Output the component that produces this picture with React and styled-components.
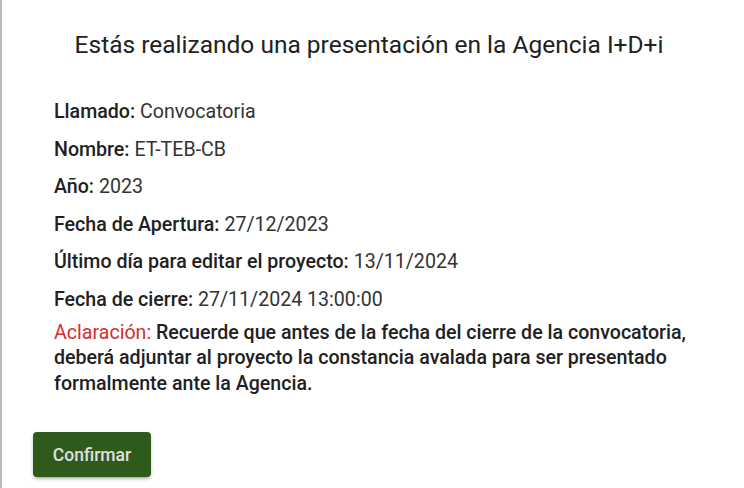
import React from 'react'
import styled, { createGlobalStyle } from 'styled-components'

const GlobalStyle = createGlobalStyle`
  html, body {
    margin: 0;
    padding: 0;
    background: #ffffff;
    font-family: Roboto, "Liberation Sans", Arial, sans-serif;
  }
`

const Page = styled.div`
  height: 488px;
  box-sizing: border-box;
  border-left: 2px solid #b9b9b9;
  background: #fff;
  overflow: hidden;
`

const Title = styled.h2`
  margin: 0;
  padding: 29px 8px 0 0;
  text-align: center;
  font-size: 24.5px;
  font-weight: 400;
  line-height: 32px;
  color: #212121;
`

const Details = styled.div`
  display: flex;
  flex-direction: column;
  gap: 11px;
  padding: 38px 20px 0 52px;
`

const Row = styled.p`
  margin: 0;
  font-size: 19.6px;
  line-height: 26.6px;
  color: #333;
`

const Label = styled.span`
  font-weight: 500;
  color: #212121;
`

const Notice = styled.p`
  margin: -5px 0 0;
  font-size: 19.6px;
  line-height: 25.5px;
  font-weight: 500;
  color: #212121;
  max-width: 670px;
`

const Warn = styled.span`
  color: #d32f2f;
  font-weight: 400;
`

const Actions = styled.div`
  padding: 36px 0 0 31px;
`

const Button = styled.button`
  width: 118px;
  height: 45px;
  border: none;
  border-radius: 4px;
  background: #2e5a1c;
  color: #e0e0e0;
  font-family: Roboto, "Liberation Sans", Arial, sans-serif;
  font-size: 17.5px;
  font-weight: 500;
  box-shadow: 0 3px 3px -2px rgba(0,0,0,0.25), 0 2px 4px rgba(0,0,0,0.18);
  cursor: pointer;
`

const rows = [
  ['Llamado:', 'Convocatoria'],
  ['Nombre:', 'ET-TEB-CB'],
  ['Año:', '2023'],
  ['Fecha de Apertura:', '27/12/2023'],
  ['Último día para editar el proyecto:', '13/11/2024'],
  ['Fecha de cierre:', '27/11/2024 13:00:00'],
]

export default function App() {
  return (
    <Page>
      <GlobalStyle />
      <Title>Estás realizando una presentación en la Agencia I+D+i</Title>
      <Details>
        {rows.map(([label, value]) => (
          <Row key={label}>
            <Label>{label}</Label> {value}
          </Row>
        ))}
        <Notice>
          <Warn>Aclaración:</Warn> Recuerde que antes de la fecha del cierre de la convocatoria,
          deberá adjuntar al proyecto la constancia avalada para ser presentado formalmente ante la Agencia.
        </Notice>
      </Details>
      <Actions>
        <Button>Confirmar</Button>
      </Actions>
    </Page>
  )
}
